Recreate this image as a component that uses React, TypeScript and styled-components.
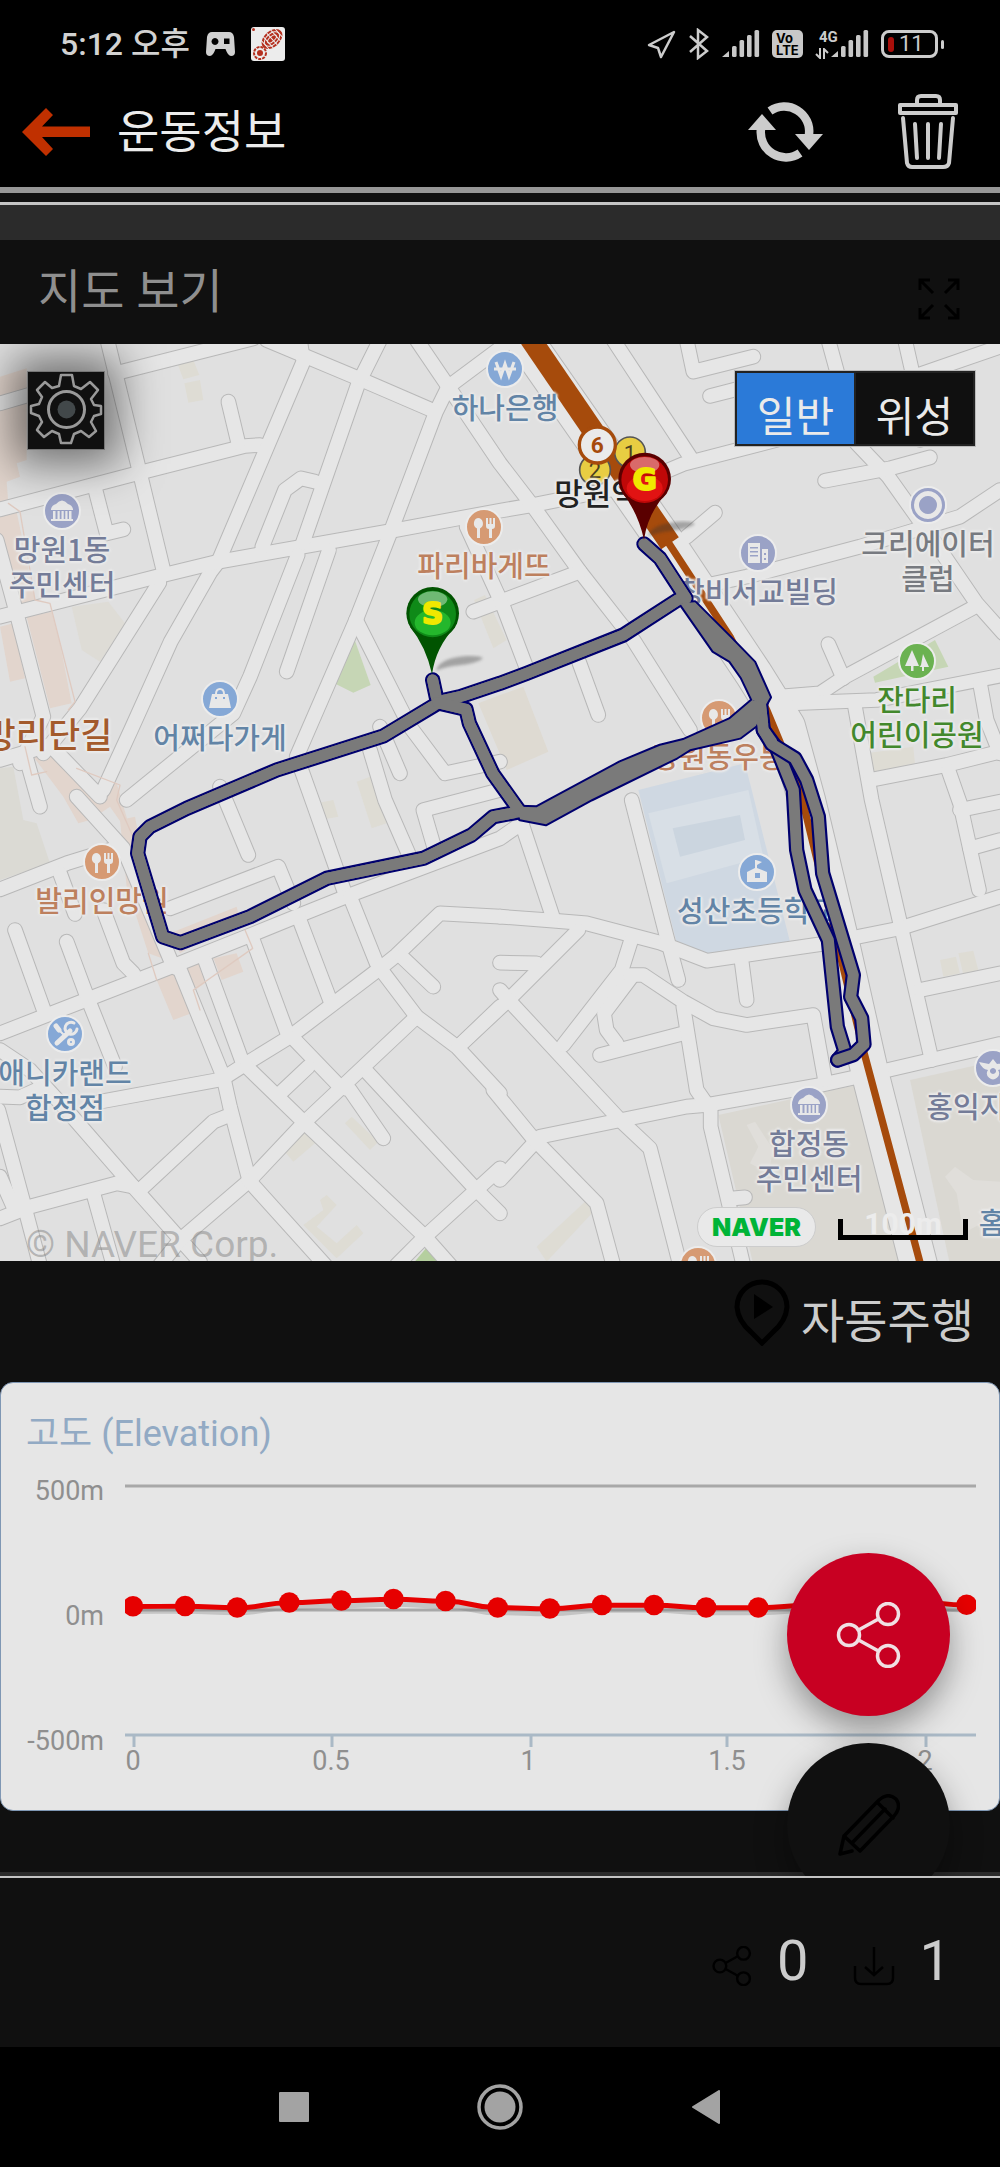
import React from "react";
import styled, { createGlobalStyle } from "styled-components";

const GlobalStyle = createGlobalStyle`
  * { box-sizing: border-box; }
  body { margin: 0; background: #000; }
  button { appearance: none; border: 0; padding: 0; margin: 0; background: none; color: inherit; font: inherit; cursor: pointer; }
  svg { display: block; flex: none; }
  h1, h2, p { margin: 0; font-weight: 400; }
`;

const Screen = styled.div`
  display: flex;
  flex-direction: column;
  min-height: 100vh;
  background: #101010;
  color: #ccc;
  font-family: Roboto, "Noto Sans CJK KR", sans-serif;
`;

/* ---------- status bar ---------- */

const StatusBar = styled.div`
  display: flex;
  align-items: center;
  justify-content: space-between;
  height: 88px;
  padding: 0 56px 0 60px;
  background: #000;
`;

const StatusGroup = styled.div<{ $gap: number }>`
  display: flex;
  align-items: center;
  gap: ${(p) => p.$gap}px;
`;

const Clock = styled.time`
  font-size: 32px;
  line-height: 40px;
  font-weight: 500;
  color: #d2d2d2;
`;

const VolteBadge = styled.span`
  display: flex;
  flex-direction: column;
  width: 31px;
  height: 28px;
  padding: 2px 4px;
  border-radius: 5px;
  background: #c8c8c8;
  color: #000;
  font: 700 13px/12px Inter, sans-serif;
`;

const MobileData = styled.span`
  display: flex;
  flex-direction: column;
  gap: 4px;
  width: 15px;
  margin-right: -11px;
  font-size: 15px;
  line-height: 14px;
  font-weight: 700;
  span { padding-left: 4px; }
`;

const Battery = styled.span`
  display: flex;
  align-items: center;
  width: 57px;
  height: 28px;
  padding: 0 4px;
  border: 3px solid #ccc;
  border-radius: 8px;
  font-size: 22px;
  line-height: 22px;
  gap: 5px;
`;

const BatteryCharge = styled.i`
  width: 6px;
  height: 15px;
  border-radius: 3px;
  background: #a80f0a;
`;

const BatteryCap = styled.i`
  width: 3px;
  height: 9px;
  margin-left: -9px;
  border-radius: 2px;
  background: #ccc;
`;

/* ---------- header ---------- */

const Header = styled.header`
  display: flex;
  align-items: center;
  gap: 26px;
  height: 99px;
  padding: 0 42px 12px 21px;
  background: #000;
`;

const Title = styled.h1`
  flex: 1;
  font-size: 46px;
  line-height: 60px;
  color: #ececec;
`;

const HeaderActions = styled.div`
  display: flex;
  align-items: center;
  gap: 75px;
`;

const Rule = styled.div<{ $height: number; $color: string }>`
  height: ${(p) => p.$height}px;
  background: ${(p) => p.$color};
`;

/* ---------- scrolling content ---------- */

const Content = styled.main`
  position: relative;
  overflow: hidden;
`;

const SectionHeader = styled.div`
  display: flex;
  align-items: center;
  justify-content: space-between;
  height: 104px;
  padding: 0 40px 0 38px;
`;

const SectionTitle = styled.h2`
  font-size: 47px;
  line-height: 60px;
  color: #8f8f8f;
`;

const ExpandButton = styled.button`
  padding-top: 14px;
`;

const MapFrame = styled.section`
  position: relative;
  aspect-ratio: 1000 / 917;
  overflow: hidden;
  background: #e0e0e0;
`;

const MapLayer = styled.svg`
  position: absolute;
  inset: 0;
  width: 100%;
  height: 100%;
`;

const PoiBox = styled.div<{ $x: number; $y: number; $tone: string }>`
  position: absolute;
  left: ${(p) => p.$x / 10}%;
  top: ${(p) => ((p.$y - 344) * 100) / 917}%;
  display: flex;
  flex-direction: column;
  align-items: center;
  width: 240px;
  margin: -18px 0 0 -120px;
  gap: 2px;
  color: ${(p) => p.$tone};
`;

const PoiLabel = styled.span<{ $size?: number }>`
  font-family: "Noto Sans CJK KR", sans-serif;
  font-size: ${(p) => p.$size ?? 29}px;
  line-height: 35px;
  font-weight: 500;
  text-align: center;
  white-space: pre;
  text-shadow: 0 0 2px #eee, 2px 0 2px #eaeaea, -2px 0 2px #eaeaea, 0 2px 2px #eaeaea, 0 -2px 2px #eaeaea;
`;

const SettingsButton = styled.button`
  position: absolute;
  left: 27px;
  top: 27px;
  padding: 1px 1px 4px;
  border: 1px solid #777;
  background: #101010;
  box-shadow: 0 0 44px 14px rgba(0, 0, 0, 0.5);
`;

const MapTypeToggle = styled.div`
  position: absolute;
  right: 25px;
  top: 27px;
  display: flex;
  gap: 2px;
  padding: 2px;
  background: #222;
  box-shadow: 0 0 0 1px #bbb;
`;

const MapTypeButton = styled.button<{ $active?: boolean }>`
  width: 117px;
  height: 71px;
  padding-top: 18px;
  font-size: 42px;
  line-height: 53px;
  color: #eaeaea;
  background: ${(p) => (p.$active ? "#2b7ad8" : "#101010")};
`;

const Copyright = styled.p`
  position: absolute;
  left: 26px;
  bottom: -5px;
  font-size: 37px;
  line-height: 42px;
  color: rgba(120, 120, 120, 0.45);
`;

const NaverBadge = styled.a`
  position: absolute;
  right: 184px;
  bottom: 14px;
  display: flex;
  align-items: center;
  justify-content: center;
  width: 119px;
  height: 40px;
  border: 1px solid #ccc;
  border-radius: 20px;
  background: #e9e9e9;
  color: #00b437;
  font: 900 25px/30px Inter, sans-serif;
  text-decoration: none;
`;

const ScaleBar = styled.div`
  position: absolute;
  right: 32px;
  bottom: 21px;
  width: 130px;
  height: 21px;
  border: 5px solid #000;
  border-top: 0;
  color: #ececec;
  font-weight: 700;
  font-size: 30px;
  line-height: 10px;
  text-align: center;
`;

const AutoRunRow = styled.div`
  display: flex;
  justify-content: flex-end;
  height: 121px;
  padding: 18px 26px 0 0;
`;

const AutoRunButton = styled.button`
  display: flex;
  align-items: flex-start;
  gap: 11px;
  font-size: 47px;
  line-height: 86px;
  color: #ccc;
`;

const ChartCard = styled.section`
  padding: 30px 0 0;
  border: 1px solid #7f97b4;
  border-radius: 13px;
  background: #e6e6e6;
`;

const ChartTitle = styled.h2`
  padding-left: 25px;
  font-size: 36px;
  line-height: 42px;
  color: #92aac4;
`;

const Chart = styled.svg`
  width: 100%;
  font-size: 27px;
  fill: #8f8f8f;
`;

const ContentEnd = styled.div`
  height: 65px;
  border-bottom: 4px solid #2b2b2b;
`;

const FabStack = styled.div`
  position: absolute;
  right: 50px;
  bottom: -30px;
  display: flex;
  flex-direction: column;
  gap: 27px;
`;

const Fab = styled.button<{ $color: string }>`
  display: flex;
  align-items: center;
  justify-content: center;
  width: 163px;
  height: 163px;
  border-radius: 50%;
  background: ${(p) => p.$color};
  box-shadow: 0 14px 32px rgba(0, 0, 0, 0.36);
`;

/* ---------- footer ---------- */

const Counters = styled.footer`
  display: flex;
  align-items: flex-start;
  justify-content: flex-end;
  height: 169px;
  padding: 50px 49px 0 0;
`;

const Counter = styled.button`
  display: flex;
  align-items: flex-start;
  gap: 25px;
  margin-left: 44px;
  font-size: 56px;
  line-height: 66px;
  color: #ccc;
  svg { margin-top: 18px; }
`;

const NavBar = styled.nav`
  display: flex;
  align-items: center;
  justify-content: center;
  gap: 160px;
  height: 120px;
  background: #000;
`;

const NavButton = styled.button`
  display: flex;
  align-items: center;
  justify-content: center;
  width: 46px;
  height: 46px;
`;

/* ---------- icons ---------- */

const SignalIcon = () => (
  <svg width="38" height="28" viewBox="0 0 38 28" fill="#c8c8c8">
    <path d="M0 27 L7 21 V27Z" />
    {[16, 10, 5, 0].map((y, i) => (
      <rect key={y} x={10 + i * 7.5} y={y} width="4.6" height={27 - y} rx="1.5" />
    ))}
  </svg>
);

const ShareIcon = ({ size, color, width }: { size: number; color: string; width: number }) => (
  <svg width={size} height={size} viewBox="0 0 64 66" fill="none" stroke={color} strokeWidth={width}>
    <circle cx="12" cy="33" r="10.5" />
    <circle cx="51" cy="12" r="10.5" />
    <circle cx="51" cy="54" r="10.5" />
    <path d="M21.5 28 L41.5 17 M21.5 38 L41.5 49" />
  </svg>
);

type Glyph = "hall" | "bank" | "food" | "bag" | "office" | "ring" | "tree" | "school" | "tools" | "police";

const glyphs: Record<Glyph, React.ReactNode> = {
  hall: <path d="M7 16 Q8 12 12 11 Q18 4 24 11 Q28 12 29 16 V17 H7Z M9 18 h2.500v8h-2.500z M13.500 18 h2.200v8h-2.200z M17.500 18 h2.200v8h-2.200z M21.300 18 h2.200v8h-2.200z M25 18 h2.500v8h-2.500z M7 26 h22v2h-22z" />,
  bank: <path d="M9 11 L14 25 L18 13 L22 25 L27 11 M7 18 H29" fill="none" stroke="#e8e8e8" strokeWidth="3" />,
  food: <path d="M12 9 a5 5.500 0 0 1 2 10.500 V29 h-3 V19.500 A5 5.500 0 0 1 12 9Z M20 9 h2v6h1.500v-6h2v6h1.500v-6h2v8 q0 3-3 3 V29 h-3 V20 q-3 0-3-3Z" />,
  bag: <path fillRule="evenodd" d="M10 13 H13 Q13 7 18 7 Q23 7 23 13 H26 L29 27 H7Z M15 13 H21 Q21 9 18 9 Q15 9 15 13Z M13 16h2v2h-2z M21 16h2v2h-2z" />,
  office: <path fillRule="evenodd" d="M8 8 H20 V28 H8Z M10 12h8v1.500h-8z M10 16h8v1.500h-8z M10 20h8v1.500h-8z M22 14 H28 V28 H22Z M24 18h2v2h-2z M24 23h2v2h-2z" />,
  ring: <path fillRule="evenodd" d="M18 4 a14 14 0 1 0 .01 0Z M18 9 a9 9 0 1 1 -.01 0Z" />,
  tree: <path d="M13 7 L20 23 H14.500 V28 H12 V23 H6Z M24 11 L30 24 H25 V28 H23 V24 H20.500 L22 22Z" />,
  school: <path fillRule="evenodd" d="M17 6 L23 8 L18 11 V14 L28 18 V28 H8 V18 L16 14 V6Z M16 19 h5v5h-5z" />,
  tools: (
    <g fill="none" stroke="#e8e8e8" strokeLinecap="round">
      <path d="M9 10 L12 14" strokeWidth="5" />
      <path d="M12 14 L17 19" strokeWidth="2" />
      <path d="M10 27 L23 15" strokeWidth="5" />
      <path d="M27 7 A6 6 0 1 0 30 13" strokeWidth="3" />
      <circle cx="24" cy="26" r="2.500" strokeWidth="3" />
    </g>
  ),
  police: <path fillRule="evenodd" d="M4 12 L14 14 L18 9 L22 14 L32 12 Q29 19 23 20 A6 6 0 1 1 13 20 Q7 19 4 12Z M18 18 a3 3 0 1 0 .01 0Z" />,
};

const PoiIcon = ({ glyph, color }: { glyph: Glyph; color: string }) => (
  <svg width="36" height="36" viewBox="0 0 36 36" overflow="visible" fill="#e8e8e8">
    <circle cx="18" cy="18" r="18" fill={color} stroke="#ececec" strokeWidth="2" />
    {glyphs[glyph]}
  </svg>
);

/* ---------- map data ---------- */

const BLUE = "#85a8d6";
const VIOLET = "#9aa2c6";
const ORANGE = "#d69a73";

type Poi = { x: number; y: number; icon: Glyph; color: string; tone: string; label: string };

const pois: Poi[] = [
  { x: 62, y: 511, icon: "hall", color: VIOLET, tone: "#747c98", label: "망원1동\n주민센터" },
  { x: 505, y: 369, icon: "bank", color: BLUE, tone: "#6284a6", label: "하나은행" },
  { x: 484, y: 527, icon: "food", color: ORANGE, tone: "#bd805e", label: "파리바게뜨" },
  { x: 220, y: 699, icon: "bag", color: BLUE, tone: "#6284a6", label: "어쩌다가게" },
  { x: 758, y: 553, icon: "office", color: VIOLET, tone: "#747c98", label: "창비서교빌딩" },
  { x: 928, y: 505, icon: "ring", color: VIOLET, tone: "#777a80", label: "크리에이터\n클럽" },
  { x: 917, y: 661, icon: "tree", color: "#6bb251", tone: "#43882c", label: "잔다리\n어린이공원" },
  { x: 719, y: 718, icon: "food", color: ORANGE, tone: "#bd805e", label: "망원동우동" },
  { x: 757, y: 872, icon: "school", color: BLUE, tone: "#6284a6", label: "성산초등학교" },
  { x: 809, y: 1105, icon: "hall", color: VIOLET, tone: "#747c98", label: "합정동\n주민센터" },
  { x: 993, y: 1068, icon: "police", color: VIOLET, tone: "#747c98", label: "홍익지구대" },
  { x: 102, y: 862, icon: "food", color: ORANGE, tone: "#bd805e", label: "발리인망원" },
  { x: 65, y: 1034, icon: "tools", color: BLUE, tone: "#6284a6", label: "애니카랜드\n합정점" },
  { x: 698, y: 1265, icon: "food", color: ORANGE, tone: "#bd805e", label: "" },
];

/* Street centre lines; three map units make one pixel at full width. */
const streets = [
  "322,0 420,400 490,690",
  "0,508 420,398 735,318 780,315",
  "715,310 685,185",
  "345,100 760,-5",
  "900,0 910,65 655,665 632,695 512,905 395,1165 310,1350",
  "478,728 240,1105 130,1240",
  "0,830 470,710 655,665 1160,575 1500,512 1600,495 1900,435 2050,372 2560,240",
  "800,0 1075,115 1300,212",
  "1140,0 1075,130 908,610",
  "893,645 750,1010 700,1120 380,1380",
  "987,630 860,995",
  "787,620 855,450 903,415 945,425",
  "1500,25 1345,140 1308,215 1172,575 1068,840 890,1250 940,1390 1035,1660",
  "1068,840 1230,1160 1335,1300 1500,1265",
  "1140,1160 1200,1300",
  "1250,0 1345,140 1500,370 1600,500 1740,695 1900,900 2070,1170",
  "1840,0 2070,350",
  "1500,25 1560,-20",
  "2485,0 2570,310 2665,410 2800,600 2930,790 3010,880",
  "2715,0 2740,110 2760,300",
  "2740,110 3000,20",
  "2475,422 2670,385 2790,352",
  "3000,450 2880,530 2580,620 2240,710 2100,740",
  "2060,590 2145,518",
  "2925,800 2535,1010 2460,1060 2340,1070",
  "2485,912 2530,1015",
  "2370,1090 2630,1080 3010,1005",
  "2565,1100 2615,1380 2703,1760 2795,2160",
  "2610,1320 2840,1275 3000,1235",
  "2940,1030 2960,1140 3000,1240",
  "2845,1290 2880,1390 2937,1650",
  "2880,1410 3000,1385",
  "2910,1525 3000,1500",
  "1500,1730 1660,1742 1760,1750 1980,1808 2120,1862 2460,1813 2700,1765 3000,1670",
  "2760,1950 3000,1900",
  "1500,2520 1620,2390 2060,2300 2120,2295 2460,2235 2620,2200 3000,2112",
  "1895,1380 2000,1790 2035,1920",
  "2225,1865 2240,1980",
  "1565,1450 1658,1730",
  "1735,1770 1525,1980 1375,2120",
  "1500,1868 1610,1870",
  "1500,1950 1535,1990 1860,2340 1950,2425 2040,2775",
  "1895,1795 1865,1890 1690,2115",
  "1895,1910 1812,2020 1820,2070 1850,2110",
  "1890,1905 1930,1905 2050,1985 2140,2035 2240,2055 2440,2025 2475,2220",
  "1800,2145 2050,2080",
  "2050,2000 2090,2250 2132,2310 2132,2360 2230,2775",
  "1480,2250 1595,2390 1790,2590 1840,2775",
  "2200,2575 2235,2572",
  "0,2080 270,1975 515,1880 740,1790 900,1725 1050,1665 1500,1495 1565,1450",
  "0,1648 200,1570 360,1520",
  "45,1770 135,2020",
  "200,1805 265,1980 345,2180",
  "180,1600 225,1722",
  "310,1710 370,1870 400,1900",
  "230,1370 370,1525 520,1880 540,1890 670,2210 690,2300 745,2510",
  "617,1865 725,2160",
  "755,1790 862,2080",
  "895,1730 990,1980",
  "1050,1670 1130,1870",
  "0,2270 60,2272 120,2245",
  "0,2130 90,2190 200,2310 400,2540 600,2765",
  "300,2285 665,2218 740,2170 870,2090 1140,1885 1190,1845 1320,1720 1500,1730",
  "1205,1850 1300,1940",
  "1140,1885 1250,2030 1370,2120 1500,2260",
  "1250,2030 910,2350 750,2520 540,2700 480,2775",
  "740,2180 910,2345 1275,2690 1350,2775",
  "880,2095 1020,2240",
  "1020,2240 1050,2250 1150,2395",
  "1100,2195 1420,2540 1500,2620",
  "835,2265 925,2180",
  "1500,2000 1375,2120",
  "1500,2485 1275,2690 1190,2775",
  "745,2520 975,2775",
  "420,2550 640,2345 690,2325",
  "0,2635 90,2600 350,2530 400,2540",
  "-5,2310 75,2605 120,2775",
  "280,2560 340,2775",
  "0,2510 40,2600",
  "0,190 110,158",
  "-10,600 50,820 130,1130 60,1270",
  "0,1260 150,1215 300,1370",
  "75,1240 120,1400",
  "285,445 320,580 370,568",
  "1110,1230 1155,1380 1225,1540",
  "1500,1350 1270,1410 1305,1530",
  "660,1340 745,1545",
  "510,1705 835,1580 880,1690",
  "1735,960 1795,1125",
  "1420,815 1740,695",
  "1400,560 1510,800 1580,985",
  "2060,0 2080,95 2260,50",
  "2130,168 2240,140",
];

const boulevard = "1560,-20 2020,640 2260,1000 2360,1160 2420,1380 2520,1800 2610,2200 2760,2790";

const blocks = [
  ["#e2d5cd", "0,110 80,85 80,360 50,370 60,410 20,425 25,490 0,490"],
  ["#e2d5cd", "0,530 50,515 105,780 60,800 20,795 0,700"],
  ["#e2d5cd", "80,832 155,815 180,910 215,1090 150,1105"],
  ["#e2d5cd", "0,860 40,850 75,1015 30,1025"],
  ["#e2d5cd", "100,1250 160,1235 290,1345 350,1330 400,1500 330,1400 270,1440 235,1450 190,1370"],
  ["#e2d5cd", "360,1440 405,1430 430,1560 500,1860 445,1840 380,1640"],
  ["#e2d5cd", "510,1780 710,1700 720,1740 540,1840"],
  ["#e2d5cd", "470,1920 520,1900 575,2020 600,2010 520,2040"],
  ["#e2d5cd", "560,1885 600,1870 615,1930 585,1950"],
  ["#e2d5cd", "640,1855 710,1840 730,1895 665,1920"],
  ["#dbdad4", "0,1285 40,1280 70,1440 110,1450 150,1570 0,1620"],
  ["#dedcd6", "215,800 325,785 375,850 300,965 245,930"],
  ["#dedcd4", "530,65 580,60 598,105 550,118"],
  ["#dedcd4", "553,130 600,120 610,180 565,188"],
  ["#c6d6b5", "1060,888 1112,1035 1060,1058 1003,1030"],
  ["#c6d6b5", "2620,1010 2805,900 2845,980 2625,1028"],
  ["#b5cf9f", "1240,2770 1278,2725 1320,2770"],
  ["#dedcd4", "1422,780 1455,765 1520,900 1480,925"],
  ["#dedad2", "1435,1090 1500,1065 1570,1040 1645,1235 1520,1290"],
  ["#cfd8e2", "1915,1350 2235,1270 2370,1805 2125,1840 2030,1810"],
  ["#d8dfe6", "1945,1420 2245,1350 2290,1550 2000,1630"],
  ["#cbd5df", "2018,1465 2220,1425 2235,1500 2040,1550"],
  ["#dad8d2", "2155,2325 2570,2235 2710,2775 2260,2775"],
  ["#dad8d2", "2730,2220 3000,2160 3000,2775 2850,2775"],
  ["#e0deda", "2240,2355 2265,2345 2320,2430 2305,2500 2250,2470 2275,2420"],
  ["#e0deda", "2835,2510 2865,2480 2920,2520 3000,2525 3000,2620 2890,2680 2870,2560"],
  ["#dedcd4", "2820,1860 2868,1850 2880,1900 2830,1910"],
  ["#dedcd4", "2875,1840 2920,1832 2935,1890 2890,1905"],
  ["#dedcd4", "1035,2350 1055,2330 1135,2405 1110,2430"],
  ["#dedcd4", "850,2430 925,2370 950,2405 880,2465"],
  ["#dedcd4", "910,2655 970,2610 960,2580 980,2565 1010,2595 950,2660 1010,2710 1070,2655 1090,2680 1010,2755"],
  ["#dedcd4", "2600,1240 2740,1220 2745,1270 2610,1300"],
  ["#dedcd4", "1610,2720 1755,2585 1785,2610 1640,2765"],
  ["#dedcd4", "950,1390 1000,1380 1015,1430 960,1440"],
  ["#dedcd4", "1070,1325 1110,1310 1160,1450 1115,1465"],
];

const routeLines = [
  "1298,1020 1313,1090 1150,1188 830,1290 560,1405 450,1460 420,1490 413,1540 488,1790 542,1808 750,1730 980,1615 1270,1555 1415,1485 1480,1430 1560,1415",
  "1313,1085 1380,1070 1500,1030 1580,1000 1870,885 2040,775",
  "1313,1088 1398,1108 1408,1150 1478,1300 1560,1415 1635,1432",
  "1932,612 1980,655 2058,775",
  "2280,1080 2290,1170 2330,1225 2380,1350 2390,1530 2415,1650 2485,1800 2512,2060 2535,2135 2513,2160",
  "2290,1170 2315,1212 2385,1255 2420,1320 2455,1430 2468,1600 2560,1905 2552,1970 2585,2035 2592,2113 2560,2144 2513,2160",
];

const routeAreas = [
  "1555,1400 1610,1402 1650,1380 1860,1267 1980,1217 2050,1200 2190,1137 2257,1080 2300,1090 2268,1157 2220,1193 2070,1228 2030,1253 1775,1378 1638,1453 1560,1438",
  "2040,790 2140,933 2190,963 2225,1013 2257,1080 2300,1090 2310,1072 2263,967 2190,892 2085,787",
];

const VIEW = "0 12 3000 2751";

const Pin = ({ x, y, letter, light, mid, dark }: { x: number; y: number; letter: string; light: string; mid: string; dark: string }) => (
  <g transform={`translate(${x} ${y})`}>
    <path d="M10 172 Q20 134 100 128 Q150 126 150 136 Q130 150 80 156 Q40 160 10 172Z" fill="#333" opacity=".35" filter="url(#soft)" />
    <path d="M-68 40 Q-20 100 -2 182 Q10 100 68 40Z" fill={dark} />
    <circle r="79" fill={dark} />
    <circle r="70" cy="2" fill={mid} />
    <ellipse cy="28" rx="54" ry="38" fill={light} opacity=".7" />
    <ellipse cy="-42" rx="44" ry="24" fill="#fff" opacity=".4" />
    <text y="33" textAnchor="middle" fontFamily="DejaVu Sans, sans-serif" fontWeight="700" fontSize="88" fill="#f0e800" stroke="#f0e800" strokeWidth="6">
      {letter}
    </text>
  </g>
);

const RouteMap = () => (
  <MapFrame aria-label="지도">
    <MapLayer viewBox={VIEW} fill="none" strokeLinejoin="round" strokeLinecap="round">
      {blocks.map(([fill, points]) => (
        <polygon key={points} points={points} fill={fill} />
      ))}
      <g stroke="#b8b8b8" strokeWidth="47">
        {streets.map((s) => <polyline key={s} points={s} />)}
      </g>
      <polyline points={boulevard} stroke="#b8b8b8" strokeWidth="116" />
      <g stroke="#e6e6e6" strokeWidth="41">
        {streets.map((s) => <polyline key={s} points={s} />)}
      </g>
      <polyline points={boulevard} stroke="#e6e6e6" strokeWidth="110" />
      <path d="M25 490 L60 515 L105 780 L150 790 L225 1085 L205 1110 M75 1220 L95 1305 L140 1295 M230 1285 L360 1335 L350 1380 L430 1560 M445 1840 L470 1920 M600 2010 L580 1950 L758 1825 L735 1770" stroke="#dfcac0" strokeWidth="4" />
      <g stroke="#a64b0c" strokeLinecap="butt">
        <polyline points="1590,-5 2010,610" strokeWidth="64" />
        <polyline points="2000,600 2190,890 2300,1110 2400,1350 2590,2130 2762,2775" strokeWidth="22" />
      </g>
    </MapLayer>

    {pois.map((p) => (
      <PoiBox key={`${p.x}-${p.y}`} $x={p.x} $y={p.y} $tone={p.tone}>
        <PoiIcon glyph={p.icon} color={p.color} />
        {p.label && <PoiLabel>{p.label}</PoiLabel>}
      </PoiBox>
    ))}
    <PoiBox $x={48} $y={733} $tone="#a35a2c"><PoiLabel $size={35}>망리단길</PoiLabel></PoiBox>
    <PoiBox $x={1032} $y={1222} $tone="#6284a6"><PoiLabel>홈플러스</PoiLabel></PoiBox>

    <MapLayer viewBox={VIEW} textAnchor="middle">
      <g stroke="#555" strokeWidth="5" fill="#e8cd42">
        <circle cx="1890" cy="337" r="46" />
        <circle cx="1785" cy="390" r="46" />
      </g>
      <g fill="#4a4020" fontSize="66">
        <text x="1890" y="362">1</text>
        <text x="1785" y="414">2</text>
      </g>
      <circle cx="1792" cy="315" r="54" fill="#eaeaea" stroke="#a64b0c" strokeWidth="10" />
      <text x="1792" y="339" fontSize="68" fontWeight="700" fill="#a64b0c">6</text>
    </MapLayer>
    <PoiBox $x={597} $y={492} $tone="#222"><PoiLabel $size={31}>망원역</PoiLabel></PoiBox>

    <MapLayer viewBox={VIEW} strokeLinejoin="round" strokeLinecap="round">
      <defs>
        <filter id="soft"><feGaussianBlur stdDeviation="4" /></filter>
      </defs>
      <g fill="#00006e" stroke="#00006e" strokeWidth="12">
        {routeAreas.map((a) => <polygon key={a} points={a} />)}
      </g>
      {routeLines.map((r) => (
        <g key={r} fill="none">
          <polyline points={r} stroke="#00006e" strokeWidth="46" />
          <polyline points={r} stroke="#7a7a7a" strokeWidth="33" />
        </g>
      ))}
      <g fill="none" stroke="#7a7a7a" strokeWidth="33">
        {routeLines.slice(0, 4).map((r) => <polyline key={r} points={r} />)}
        <polyline points="2280,1080 2290,1170 2315,1205" />
      </g>
      <g fill="#7a7a7a">
        {routeAreas.map((a) => <polygon key={a} points={a} />)}
      </g>
      <Pin x={1298} y={820} letter="S" light="#2ecb35" mid="#0f8a18" dark="#015401" />
      <Pin x={1934} y={417} letter="G" light="#f01818" mid="#c00808" dark="#5a0000" />
    </MapLayer>

    <SettingsButton aria-label="지도 설정">
      <svg width="74" height="72" viewBox="0 0 74 72" fill="none" stroke="#999" strokeWidth="2.500" strokeLinejoin="round">
        <path d="M32 2 H43 L45 13 L52 16 L61 9 L69 17 L62 26 L65 32 L72 33 V41 L65 43 L62 49 L67 58 L60 64 L52 58 L45 61 L42 70 H32 L30 61 L23 58 L15 64 L8 57 L13 49 L10 43 L2 40 V33 L10 31 L13 24 L8 17 L16 9 L23 15 L30 13Z" />
        <circle cx="37.500" cy="36.500" r="18" strokeWidth="3" />
        <circle cx="37.500" cy="36.500" r="9" fill="#42484a" stroke="none" />
      </svg>
    </SettingsButton>
    <MapTypeToggle role="group" aria-label="지도 종류">
      <MapTypeButton $active aria-pressed="true">일반</MapTypeButton>
      <MapTypeButton aria-pressed="false">위성</MapTypeButton>
    </MapTypeToggle>
    <Copyright>© NAVER Corp.</Copyright>
    <NaverBadge href="#naver">NAVER</NaverBadge>
    <ScaleBar>100m</ScaleBar>
  </MapFrame>
);

/* ---------- elevation chart ---------- */

const elevations = [14, 15, 9, 29, 37, 43, 35, 9, 5, 19, 19, 9, 9, 19, 29, 33, 20];
const points = elevations.map((m, i) => ({ x: 133 + i * 52.1, y: 155 - m / 4 }));
const curve = points
  .map((p, i) => {
    if (i === 0) return `M${p.x} ${p.y}`;
    const mid = (points[i - 1].x + p.x) / 2;
    return `C${mid} ${points[i - 1].y} ${mid} ${p.y} ${p.x} ${p.y}`;
  })
  .join(" ");

const ElevationChart = () => (
  <Chart viewBox="1 0 998 355" role="img" aria-label="고도 그래프">
    <defs>
      <clipPath id="plot"><rect x="125" y="0" width="851" height="300" /></clipPath>
    </defs>
    <path d="M125 31 H976 M125 155 H976" stroke="#a8a8a8" strokeWidth="3" />
    <path d="M125 280 H976 M134 280 V292 M332 280 V292 M531 280 V292 M727 280 V292 M926 280 V292" stroke="#aab9c6" strokeWidth="3" />
    <g fill="none" clipPath="url(#plot)">
      <path d={curve} transform="translate(0 4)" stroke="#777" strokeOpacity=".3" strokeWidth="7" />
      <path d={curve} stroke="#e60000" strokeWidth="5" />
      {points.map((p) => <circle key={p.x} cx={p.x} cy={p.y - 0.3} r="10.300" fill="#e60000" />)}
    </g>
    <g textAnchor="end">
      <text x="104" y="45">500m</text>
      <text x="104" y="170">0m</text>
      <text x="104" y="295">-500m</text>
    </g>
    <g textAnchor="middle">
      <text x="133" y="315">0</text>
      <text x="331" y="315">0.5</text>
      <text x="528" y="315">1</text>
      <text x="727" y="315">1.5</text>
      <text x="925" y="315">2</text>
    </g>
  </Chart>
);

export default function App() {
  return (
    <Screen>
      <GlobalStyle />
      <StatusBar>
        <StatusGroup $gap={16}>
          <Clock>5:12 오후</Clock>
          <svg width="29" height="24" viewBox="0 0 29 24">
            <path fill="#d0d0d0" fillRule="evenodd" d="M6 0 H23 Q27 0 28 5 L29 20 Q29 24 25 24 Q22 24 19.500 17 H9.500 Q7 24 4 24 Q0 24 0 20 L1 5 Q2 0 6 0Z M9 6 a3.500 3.500 0 1 0 .01 0Z M18 6.500 h5.500v5.500h-5.500z" />
          </svg>
          <svg width="34" height="34" viewBox="0 0 34 34">
            <rect width="34" height="34" rx="3" fill="#ececec" />
            <g transform="rotate(-42 21 12)" fill="none" stroke="#b5301f">
              <ellipse cx="21" cy="12" rx="12" ry="8" fill="#b5301f" stroke="none" />
              <ellipse cx="21" cy="12" rx="9" ry="5.500" stroke="#ececec" strokeWidth="1" />
              <ellipse cx="21" cy="12" rx="5.500" ry="2.500" stroke="#ececec" strokeWidth="1" />
              <path d="M12 5 V19 M16 4 V20 M21 4 V20 M26 4 V20 M30 5 V19" stroke="#ececec" strokeWidth="1" />
            </g>
            <circle cx="9" cy="26" r="6" fill="none" stroke="#b5301f" strokeWidth="2" strokeDasharray="3 1" />
            <circle cx="9" cy="26" r="3" fill="#b5301f" />
            <circle cx="2.500" cy="2.500" r="1.500" fill="#b5301f" />
          </svg>
        </StatusGroup>
        <StatusGroup $gap={12}>
          <svg width="29" height="29" viewBox="0 0 29 29" fill="none" stroke="#ccc" strokeWidth="2.500" strokeLinejoin="round">
            <path d="M27 2 L2 15 L11 18 L14 27Z" />
          </svg>
          <svg width="22" height="32" viewBox="0 0 22 32" fill="none" stroke="#ccc" strokeWidth="2.500">
            <path d="M2 8 L19 23 L10 30 V2 L19 9 L2 24" />
          </svg>
          <SignalIcon />
          <VolteBadge><span>Vo</span><span>LTE</span></VolteBadge>
          <MobileData>
            <span>4G</span>
            <svg width="14" height="11" viewBox="0 0 14 11" fill="none" stroke="#ccc" strokeWidth="2">
              <path d="M5 0 V10 L1 6 M9 11 V1 L13 5" />
            </svg>
          </MobileData>
          <SignalIcon />
          <Battery><BatteryCharge />11</Battery>
          <BatteryCap />
        </StatusGroup>
      </StatusBar>

      <Header>
        <button aria-label="뒤로">
          <svg width="70" height="48" viewBox="0 0 70 48">
            <path d="M1 24 L25 0 L32 7 L21 18.500 H69 V29 H21 L32 41 L25 48Z" fill="#c03000" />
          </svg>
        </button>
        <Title>운동정보</Title>
        <HeaderActions>
          <button aria-label="새로고침">
            <svg width="75" height="60" viewBox="0 0 75 60">
              <g fill="none" stroke="#ccc" strokeWidth="8.500">
                <path d="M22 9 A25 25 0 0 1 61 33" />
                <path d="M52 51 A25 25 0 0 1 13 27" />
              </g>
              <path d="M0 28 L14 12 L28 28Z M47 32 L75 32 L61 48Z" fill="#ccc" />
            </svg>
          </button>
          <button aria-label="삭제">
            <svg width="60" height="76" viewBox="0 0 60 76" fill="none" stroke="#ccc" strokeWidth="4" strokeLinecap="round" strokeLinejoin="round">
              <path d="M19 10 V6 Q19 2 23 2 H38 Q42 2 42 6 V10" />
              <rect x="2" y="11" width="56" height="8" />
              <path d="M5 24 L9 69 Q10 73 14 73 H45 Q50 73 51 69 L55 24 M17 30 L19 64 M30 30 V64 M43 30 L41 64" />
            </svg>
          </button>
        </HeaderActions>
      </Header>
      <Rule $height={6} $color="#979797" />
      <Rule $height={9} $color="#101010" />
      <Rule $height={3} $color="#c4c4c4" />

      <Content>
        <Rule $height={35} $color="#2b2b2b" />
        <SectionHeader>
          <SectionTitle>지도 보기</SectionTitle>
          <ExpandButton aria-label="전체 화면">
            <svg width="42" height="42" viewBox="0 0 42 42" fill="none" stroke="#000" strokeWidth="3">
              <path d="M2 12 V2 H12 M2 2 L15 15 M30 2 H40 V12 M40 2 L27 15 M2 30 V40 H12 M2 40 L15 27 M30 40 H40 V30 M40 40 L27 27" />
            </svg>
          </ExpandButton>
        </SectionHeader>

        <RouteMap />

        <AutoRunRow>
          <AutoRunButton>
            <svg width="56" height="67" viewBox="0 0 56 67">
              <path d="M28 3 A25 25 0 0 1 53 28 Q52 42 39 53 Q32 60 28 64 Q24 60 17 53 Q4 42 3 28 A25 25 0 0 1 28 3Z" fill="none" stroke="#000" strokeWidth="5" />
              <path d="M20 15 L39 28 L20 40Z" fill="#000" />
            </svg>
            자동주행
          </AutoRunButton>
        </AutoRunRow>

        <ChartCard>
          <ChartTitle>고도 (Elevation)</ChartTitle>
          <ElevationChart />
        </ChartCard>
        <ContentEnd />

        <FabStack>
          <Fab $color="#c80022" aria-label="공유">
            <ShareIcon size={66} color="#f0e0e4" width={3.5} />
          </Fab>
          <Fab $color="#101010" aria-label="편집">
            <svg width="62" height="62" viewBox="0 0 62 62" fill="none" stroke="#000" strokeWidth="3.500" strokeLinejoin="round" strokeLinecap="round">
              <path d="M6 42 L41 6 Q50 -2 58 5 Q64 13 56 22 L22 57Z M39 8 L55 24 M47 15 L14 49 M6 42 L2 60 L14 57" />
            </svg>
          </Fab>
        </FabStack>
      </Content>

      <Rule $height={2} $color="#c4c4c4" />
      <Counters>
        <Counter aria-label="공유 0">
          <ShareIcon size={40} color="#000" width={4} />0
        </Counter>
        <Counter aria-label="다운로드 1">
          <svg width="42" height="40" viewBox="0 0 42 40" fill="none" stroke="#000" strokeWidth="2.500">
            <path d="M2 20 V32 Q2 38 8 38 H34 Q40 38 40 32 V20 M21 1 V29 M12 21 L21 29 L30 21" />
          </svg>
          1
        </Counter>
      </Counters>

      <NavBar>
        <NavButton aria-label="최근 앱">
          <svg width="30" height="30" viewBox="0 0 30 30"><rect width="30" height="30" rx="1" fill="#a3a3a3" /></svg>
        </NavButton>
        <NavButton aria-label="홈">
          <svg width="46" height="46" viewBox="0 0 46 46">
            <circle cx="23" cy="23" r="21" fill="none" stroke="#a3a3a3" strokeWidth="3.500" />
            <circle cx="23" cy="23" r="15.500" fill="#a3a3a3" />
          </svg>
        </NavButton>
        <NavButton aria-label="뒤로 가기">
          <svg width="30" height="34" viewBox="0 0 30 34">
            <path d="M2 17 L28 1 V33Z" fill="#a3a3a3" stroke="#a3a3a3" strokeWidth="2" strokeLinejoin="round" />
          </svg>
        </NavButton>
      </NavBar>
    </Screen>
  );
}
